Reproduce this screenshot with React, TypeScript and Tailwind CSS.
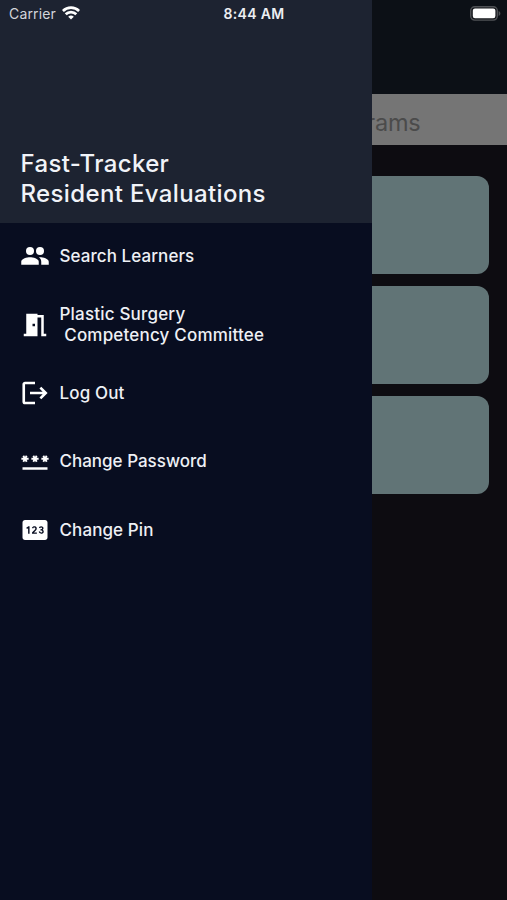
import { ReactNode } from "react";
import { MdMeetingRoom, MdPin } from "react-icons/md";

type MenuItemProps = {
  icon: ReactNode;
  className?: string;
  children: ReactNode;
};

const MenuItem = ({ icon, className, children }: MenuItemProps) => (
  <li className="flex h-[68.4px] items-center gap-[9.5px] pl-5 text-white">
    <span className="mb-px w-[30px] shrink-0">{icon}</span>
    <span className={`whitespace-pre text-[17px] font-medium leading-[21px] text-[#eef0f5] ${className ?? ""}`}>
      {children}
    </span>
  </li>
);

const People = () => (
  <svg width="30" height="30" viewBox="0 0 24 24" fill="currentColor">
    <circle cx="8" cy="8" r="3.2" />
    <circle cx="16" cy="8" r="3.2" />
    <path d="M8 13c-2.33 0-7 1.17-7 3.5V19h14v-2.5c0-2.33-4.67-3.5-7-3.5z" />
    <path d="M16 13c-.29 0-.62.02-.97.05 1.16.84 1.97 1.97 1.97 3.45V19h6v-2.5c0-2.33-4.67-3.5-7-3.5z" />
  </svg>
);

const LogOut = () => (
  <svg width="30" height="30" viewBox="0 0 24 24" fill="none" stroke="currentColor" strokeWidth="2.1">
    <path d="M12 4H4a1 1 0 0 0-1 1v14a1 1 0 0 0 1 1h8" />
    <path d="M8 12h12M16.3 7.7l4.3 4.3-4.3 4.3" />
  </svg>
);

const Password = () => (
  <svg width="30" height="30" viewBox="0 0 24 24" fill="none" stroke="currentColor">
    {[4, 12, 20].map((x) => (
      <path
        key={x}
        strokeWidth="1.5"
        d={`M${x - 2.9} 10.2h5.8M${x - 1.35} 7.8l2.7 4.8M${x + 1.35} 7.8l-2.7 4.8`}
      />
    ))}
    <path d="M2 18h20" strokeWidth="2" />
  </svg>
);

const Wifi = () => (
  <svg width="18" height="14" viewBox="0 0 18 14" fill="none" stroke="white" strokeWidth="2.7">
    <path d="M0.9 5a11.6 11.6 0 0 1 16.2 0" />
    <path d="M3.7 8.3a7.5 7.5 0 0 1 10.6 0" />
    <path d="M9 13.6 6.2 10.8a4 4 0 0 1 5.6 0z" fill="white" stroke="none" />
  </svg>
);

const Battery = () => (
  <svg width="31" height="15" viewBox="0 0 31 15">
    <rect x="0.7" y="0.7" width="26.6" height="13.4" rx="4" fill="#15171b" stroke="#4f5155" strokeWidth="1.4" />
    <rect x="2.8" y="2.6" width="22.6" height="9.6" rx="2.2" fill="white" />
    <path d="M28.6 5v5c1.1-.4 1.8-1.4 1.8-2.5s-.7-2.1-1.8-2.5z" fill="#4f5155" />
  </svg>
);

const StatusBar = () => (
  <div className="absolute inset-x-0 top-0 flex h-[26px] items-center justify-between pl-[9px] pr-[6px] text-[14px]">
    <div className="flex w-40 items-center gap-[6px] text-[#d3d5da]">
      <span className="tracking-[0.15px]">Carrier</span>
      <Wifi />
    </div>
    <div className="-ml-0.5 font-semibold tracking-[0.35px] text-[#eceef2]">8:44 AM</div>
    <div className="flex w-40 justify-end">
      <Battery />
    </div>
  </div>
);

// Home screen, already dimmed by the open drawer
const Programs = () => (
  <div className="h-full">
    <div className="h-[94px] bg-[#0c1016]" />
    <div className="flex h-[51px] items-center justify-end bg-[#757575] pr-[86.5px] pt-1.5 text-[23.5px] tracking-[-0.2px] text-[#4b4b4b]">
      Search Programs
    </div>
    <div className="flex flex-col gap-3 px-[18px] pt-[30.5px]">
      <div className="h-[98px] rounded-xl bg-[#617476]" />
      <div className="h-[98px] rounded-xl bg-[#617476]" />
      <div className="h-[98px] rounded-xl bg-[#617476]" />
    </div>
  </div>
);

const Drawer = () => (
  <div className="absolute inset-y-0 left-0 w-[372.4px] bg-[#080d20]">
    <div className="flex h-[222.5px] items-end bg-[#1d2331] pb-[13.5px] pl-[20.5px]">
      <h1 className="text-[24px] font-medium leading-[30px] tracking-[0.36px] text-[#f1f3f8]">
        Fast-Tracker
        <br />
        Resident Evaluations
      </h1>
    </div>
    <ul>
      <MenuItem icon={<People />} className="tracking-[0.07px]">
        Search Learners
      </MenuItem>
      <MenuItem icon={<MdMeetingRoom size={30} />} className="tracking-[0.19px]">
        {"Plastic Surgery\n Competency Committee"}
      </MenuItem>
      <MenuItem icon={<LogOut />} className="tracking-[0.15px]">
        Log Out
      </MenuItem>
      <MenuItem icon={<Password />}>Change Password</MenuItem>
      <MenuItem icon={<MdPin size={30} />} className="tracking-[0.1px]">
        Change Pin
      </MenuItem>
    </ul>
  </div>
);

export default function App() {
  return (
    <div className="relative h-[900px] w-[507px] overflow-hidden bg-[#0d0c11] font-['Inter',sans-serif]">
      <Programs />
      <Drawer />
      <StatusBar />
    </div>
  );
}
